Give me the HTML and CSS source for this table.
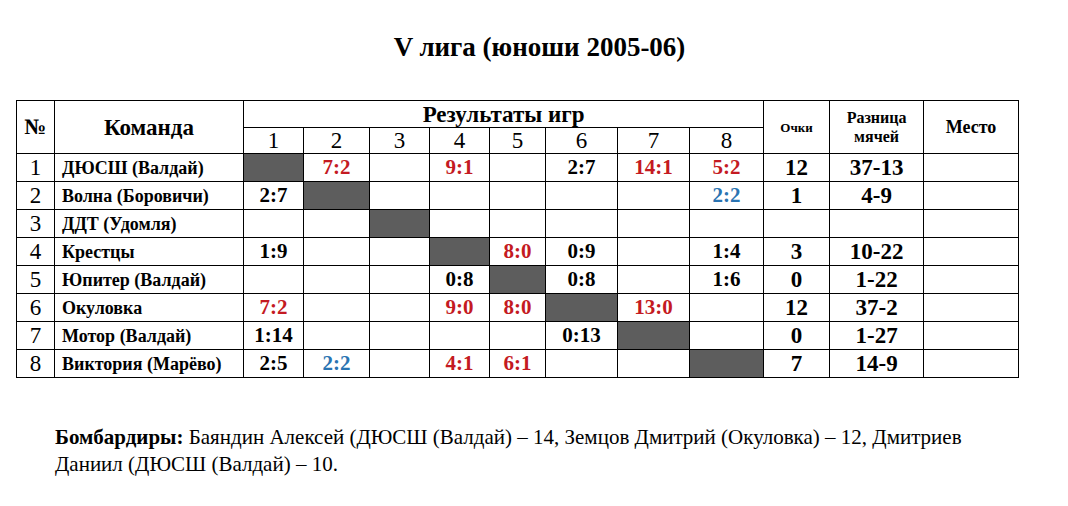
FILE: index.html
```html
<!DOCTYPE html>
<html lang="ru">
<head>
<meta charset="utf-8">
<title>V лига (юноши 2005-06)</title>
<link rel="stylesheet" href="styles.css">
</head>
<body>
<div class="page">
  <h1 class="title">V лига (юноши 2005-06)</h1>
  <table class="grid">
    <colgroup>
      <col class="c-num"><col class="c-team">
      <col class="c1"><col class="c2"><col class="c3"><col class="c4">
      <col class="c5"><col class="c6"><col class="c7"><col class="c8">
      <col class="c-pts"><col class="c-diff"><col class="c-place">
    </colgroup>
    <thead>
      <tr class="h1">
        <th rowspan="2" class="h-num">№</th>
        <th rowspan="2" class="h-team">Команда</th>
        <th colspan="8" class="h-res">Результаты игр</th>
        <th rowspan="2" class="h-pts">Очки</th>
        <th rowspan="2" class="h-diff">Разница<br>мячей</th>
        <th rowspan="2" class="h-place">Место</th>
      </tr>
      <tr class="h2">
        <th>1</th><th>2</th><th>3</th><th>4</th><th>5</th><th>6</th><th>7</th><th>8</th>
      </tr>
    </thead>
    <tbody>
      <tr>
        <td class="n">1</td><td class="t">ДЮСШ (Валдай)</td>
        <td class="x"></td><td class="s w">7:2</td><td class="s"></td><td class="s w">9:1</td><td class="s"></td><td class="s">2:7</td><td class="s w">14:1</td><td class="s w">5:2</td>
        <td class="p">12</td><td class="p">37-13</td><td></td>
      </tr>
      <tr>
        <td class="n">2</td><td class="t">Волна (Боровичи)</td>
        <td class="s">2:7</td><td class="x"></td><td class="s"></td><td class="s"></td><td class="s"></td><td class="s"></td><td class="s"></td><td class="s d">2:2</td>
        <td class="p">1</td><td class="p">4-9</td><td></td>
      </tr>
      <tr>
        <td class="n">3</td><td class="t">ДДТ (Удомля)</td>
        <td class="s"></td><td class="s"></td><td class="x"></td><td class="s"></td><td class="s"></td><td class="s"></td><td class="s"></td><td class="s"></td>
        <td class="p"></td><td class="p"></td><td></td>
      </tr>
      <tr>
        <td class="n">4</td><td class="t">Крестцы</td>
        <td class="s">1:9</td><td class="s"></td><td class="s"></td><td class="x"></td><td class="s w">8:0</td><td class="s">0:9</td><td class="s"></td><td class="s">1:4</td>
        <td class="p">3</td><td class="p">10-22</td><td></td>
      </tr>
      <tr>
        <td class="n">5</td><td class="t">Юпитер (Валдай)</td>
        <td class="s"></td><td class="s"></td><td class="s"></td><td class="s">0:8</td><td class="x"></td><td class="s">0:8</td><td class="s"></td><td class="s">1:6</td>
        <td class="p">0</td><td class="p">1-22</td><td></td>
      </tr>
      <tr>
        <td class="n">6</td><td class="t">Окуловка</td>
        <td class="s w">7:2</td><td class="s"></td><td class="s"></td><td class="s w">9:0</td><td class="s w">8:0</td><td class="x"></td><td class="s w">13:0</td><td class="s"></td>
        <td class="p">12</td><td class="p">37-2</td><td></td>
      </tr>
      <tr>
        <td class="n">7</td><td class="t">Мотор (Валдай)</td>
        <td class="s">1:14</td><td class="s"></td><td class="s"></td><td class="s"></td><td class="s"></td><td class="s">0:13</td><td class="x"></td><td class="s"></td>
        <td class="p">0</td><td class="p">1-27</td><td></td>
      </tr>
      <tr>
        <td class="n">8</td><td class="t">Виктория (Марёво)</td>
        <td class="s">2:5</td><td class="s d">2:2</td><td class="s"></td><td class="s w">4:1</td><td class="s w">6:1</td><td class="s"></td><td class="s"></td><td class="x"></td>
        <td class="p">7</td><td class="p">14-9</td><td></td>
      </tr>
    </tbody>
  </table>
  <p class="scorers"><b>Бомбардиры:</b> <span>Баяндин Алексей (ДЮСШ (Валдай) – 14, Земцов Дмитрий (Окуловка) – 12, Дмитриев</span> <span>Даниил (ДЮСШ (Валдай) – 10.</span></p>
</div>
</body>
</html>
```

FILE: styles.css
```css
html, body {
  margin: 0;
  padding: 0;
  background: #ffffff;
}

.page {
  font-family: "Liberation Serif", "Times New Roman", serif;
  color: #000000;
  padding-top: 32px;
}

.title {
  margin: 0 0 38px 0;
  padding-left: 11px;
  text-align: center;
  font-size: 27px;
  line-height: 30px;
  font-weight: bold;
}

.grid {
  margin-left: 16px;
  border-collapse: collapse;
  table-layout: fixed;
  width: 1003px;
}

.grid th,
.grid td {
  border: 1px solid #000000;
  padding: 0;
  text-align: center;
  vertical-align: middle;
  line-height: 1;
  overflow: hidden;
  white-space: nowrap;
}

.c-num { width: 38px; }
.c-team { width: 189px; }
.c1 { width: 60px; }
.c2 { width: 66px; }
.c3 { width: 60px; }
.c4 { width: 60px; }
.c5 { width: 56px; }
.c6 { width: 72px; }
.c7 { width: 72px; }
.c8 { width: 74px; }
.c-pts { width: 66px; }
.c-diff { width: 94px; }
.c-place { width: 95px; }

.h1 { height: 27px; }
.h2 { height: 26px; }

.grid .h-num { font-size: 22px; font-weight: bold; }
.grid .h-team { font-size: 23px; font-weight: bold; }
.grid .h-res { font-size: 23px; font-weight: bold; }
.grid .h-pts { font-size: 13px; font-weight: bold; }
.grid .h-diff { font-size: 16px; font-weight: bold; line-height: 19px; }
.grid .h-place { font-size: 18px; font-weight: bold; }

.h2 th {
  font-size: 23px;
  font-weight: normal;
}

.grid tbody tr { height: 28px; }

.grid .n {
  font-size: 23px;
  font-weight: normal;
}

.grid .t {
  text-align: left;
  padding-left: 7px;
  font-size: 18px;
  font-weight: bold;
}

.grid .s {
  font-size: 21px;
  font-weight: bold;
}

.grid .w { color: #c41a22; }
.grid .d { color: #2a74b2; }

.grid .x { background: #5d5d5d; }

.grid .p {
  font-size: 23px;
  font-weight: bold;
}

.scorers {
  margin: 46px 0 0 55px;
  width: 960px;
  font-size: 21px;
  line-height: 27px;
}
```
